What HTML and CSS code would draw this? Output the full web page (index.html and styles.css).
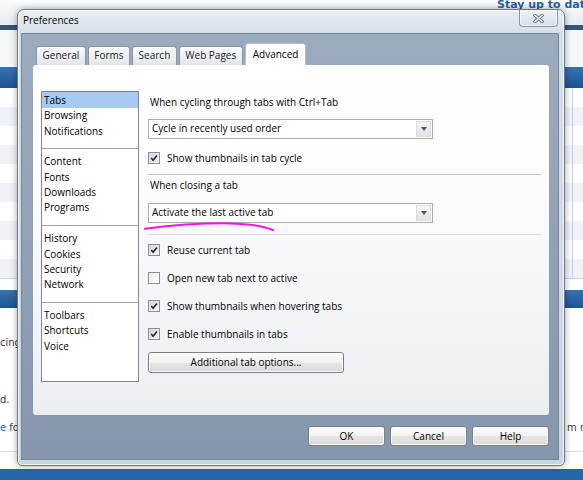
FILE: index.html
```html
<!DOCTYPE html>
<html lang="en">
<head>
<meta charset="utf-8">
<title>Preferences</title>
<link rel="stylesheet" href="styles.css">
</head>
<body>
<div class="page">
  <div class="site-top"><span class="tagline">Stay up to date</span></div>
  <div class="site-nav"></div>
  <div class="site-gap"></div>
  <div class="band"></div>
  <div class="grid">
    <div class="row"><span class="main"></span><span class="side"></span></div>
    <div class="row"><span class="main"></span><span class="side"></span></div>
    <div class="row"><span class="main"></span><span class="side"></span></div>
    <div class="row"><span class="main"></span><span class="side"></span></div>
    <div class="row"><span class="main"></span><span class="side"></span></div>
    <div class="row"><span class="main"></span><span class="side"></span></div>
    <div class="row"><span class="main"></span><span class="side"></span></div>
    <div class="row"><span class="main"></span><span class="side"></span></div>
    <div class="row"><span class="main"></span><span class="side"></span></div>
    <div class="row"><span class="main"></span><span class="side"></span></div>
  </div>
  <div class="grid-gap"></div>
  <div class="band band-2"></div>
  <div class="copy">
    <p class="line l1">cing</p>
    <p class="line l2">d.</p>
    <p class="line l3"><span class="left"><span class="link">e</span> for</span><span class="right">m m</span></p>
  </div>
  <div class="site-rule"></div>
  <div class="site-space"></div>
  <div class="site-foot"></div>
</div>

<div class="dialog">
  <div class="titlebar">
    <span class="title">Preferences</span>
    <button class="close" type="button" aria-label="Close">
      <svg width="11" height="9" viewBox="0 0 11 9"><path class="x-out" d="M2 1.5 L9 7.5 M9 1.5 L2 7.5"/><path class="x-in" d="M2 1.5 L9 7.5 M9 1.5 L2 7.5"/></svg>
    </button>
  </div>
  <div class="client">
    <div class="tabs">
      <span class="tab">General</span>
      <span class="tab">Forms</span>
      <span class="tab">Search</span>
      <span class="tab">Web Pages</span>
      <span class="tab active">Advanced</span>
    </div>
    <div class="panel">
      <div class="cats">
        <ul class="cat-group">
          <li class="cat sel">Tabs</li>
          <li class="cat">Browsing</li>
          <li class="cat">Notifications</li>
        </ul>
        <ul class="cat-group">
          <li class="cat">Content</li>
          <li class="cat">Fonts</li>
          <li class="cat">Downloads</li>
          <li class="cat">Programs</li>
        </ul>
        <ul class="cat-group">
          <li class="cat">History</li>
          <li class="cat">Cookies</li>
          <li class="cat">Security</li>
          <li class="cat">Network</li>
        </ul>
        <ul class="cat-group">
          <li class="cat">Toolbars</li>
          <li class="cat">Shortcuts</li>
          <li class="cat">Voice</li>
        </ul>
      </div>
      <div class="settings">
        <div class="heading">When cycling through tabs with Ctrl+Tab</div>
        <div class="combo"><span class="combo-value">Cycle in recently used order</span><span class="combo-btn"></span></div>
        <div class="check first">
          <span class="box on"><svg width="10" height="10" viewBox="0 0 10 10"><path d="M2.2 5 L4.1 7.3 L7.9 2.4"/></svg></span>
          <span>Show thumbnails in tab cycle</span>
        </div>
        <div class="rule"></div>
        <div class="heading heading-2">When closing a tab</div>
        <div class="combo"><span class="combo-value">Activate the last active tab</span><span class="combo-btn"></span></div>
        <div class="rule soft"></div>
        <div class="check-list">
          <div class="check">
            <span class="box on"><svg width="10" height="10" viewBox="0 0 10 10"><path d="M2.2 5 L4.1 7.3 L7.9 2.4"/></svg></span>
            <span>Reuse current tab</span>
          </div>
          <div class="check">
            <span class="box off"></span>
            <span>Open new tab next to active</span>
          </div>
          <div class="check">
            <span class="box on"><svg width="10" height="10" viewBox="0 0 10 10"><path d="M2.2 5 L4.1 7.3 L7.9 2.4"/></svg></span>
            <span>Show thumbnails when hovering tabs</span>
          </div>
          <div class="check">
            <span class="box on"><svg width="10" height="10" viewBox="0 0 10 10"><path d="M2.2 5 L4.1 7.3 L7.9 2.4"/></svg></span>
            <span>Enable thumbnails in tabs</span>
          </div>
        </div>
        <button class="btn wide" type="button">Additional tab options...</button>
      </div>
    </div>
    <div class="footer">
      <button class="btn" type="button">OK</button>
      <button class="btn" type="button">Cancel</button>
      <button class="btn" type="button">Help</button>
    </div>
  </div>
</div>

<svg class="annot" width="583" height="480" viewBox="0 0 583 480" aria-hidden="true"><path d="M145 228.8 Q190 223 230 223.4 Q259 224 273 230"/></svg>
</body>
</html>
```

FILE: styles.css
```css
* { box-sizing: border-box; }
html, body { margin: 0; padding: 0; }
body {
  width: 583px;
  height: 480px;
  overflow: hidden;
  position: relative;
  background: #fff;
  font-family: "Open Sans", "Noto Sans", sans-serif;
  font-size: 10px;
  color: #000;
}

/* ---------- web page behind the dialog ---------- */
.page { display: flex; flex-direction: column; height: 480px; }
.site-top {
  height: 25px;
  flex: none;
  padding-left: 497px;
  background: linear-gradient(#fafcfd, #e6ecf2);
}
.tagline {
  display: block;
  margin-top: -1px;
  font: bold 11px/12px "DejaVu Sans", sans-serif;
  color: #2b5f9d;
  white-space: nowrap;
}
.site-nav { height: 5px; flex: none; background: #36557a; }
.site-gap { height: 37px; flex: none; background: #f5f8fb; }
.band { height: 21px; flex: none; background: linear-gradient(#3674b4, #1b5391); }
.band-2 { height: 18px; }
.grid { flex: none; border-bottom: 1px solid #c3d4e8; }
.row { display: grid; grid-template-columns: 572px 1fr; height: 19px; }
.row:nth-child(even) { background: #eff3f8; }
.row .side { border-left: 1px solid #c3d4e8; }
.grid-gap { height: 11px; flex: none; }
.copy {
  height: 143px;
  flex: none;
  padding-top: 28px;
  font: 10px/14px "DejaVu Sans", sans-serif;
  color: #3a3a3a;
  white-space: nowrap;
}
.line { margin: 0; }
.l2 { margin-top: 43px; }
.l3 { margin-top: 14px; display: flex; }
.l3 .left { flex: 0 0 567px; }
.link { color: #2d64a8; }
.site-rule { height: 1px; flex: none; background: #dbe1e8; }
.site-space { height: 17px; flex: none; }
.site-foot { height: 11px; flex: none; background: #2766a6; }

/* ---------- dialog window ---------- */
.dialog {
  position: absolute;
  left: 17px;
  top: 9px;
  width: 548px;
  height: 457px;
  border: 1px solid #6c7785;
  border-radius: 7px 7px 5px 5px;
  padding: 0 5px 5px 3px;
  background: linear-gradient(#eaeff4, #d6dee7 24px, #d2dbe5 60%, #cbd4df);
  box-shadow: 0 0 7px rgba(0, 0, 0, .35), inset 0 0 0 1px rgba(255, 255, 255, .75);
  display: flex;
  flex-direction: column;
}
.titlebar { height: 23px; flex: none; display: flex; align-items: flex-start; }
.title { padding-left: 2px; line-height: 21px; color: #000; }
.close {
  margin-left: auto;
  margin-right: 1px;
  width: 39px;
  height: 17px;
  padding: 0;
  border: 1px solid #8a96a5;
  border-top: none;
  border-radius: 0 0 4px 4px;
  background: linear-gradient(#eef2f6, #d8dfe7);
  box-shadow: inset 0 0 0 1px rgba(255, 255, 255, .6);
  display: flex;
  align-items: center;
  justify-content: center;
}
.x-out { stroke: #6b7684; stroke-width: 3.4; fill: none; stroke-linecap: square; }
.x-in { stroke: #f4f6f8; stroke-width: 1.5; fill: none; stroke-linecap: square; }

.client {
  flex: 1;
  border: 1px solid #76869b;
  background: linear-gradient(#9dabbf, #8596ad);
  padding: 9px 9px 13px 11px;
  display: flex;
  flex-direction: column;
}

.tabs {
  display: flex;
  align-items: flex-end;
  gap: 2px;
  height: 22px;
  flex: none;
  padding-left: 3px;
}
.tab {
  height: 19px;
  padding: 0 5.5px;
  border: 1px solid #8894a5;
  border-bottom: none;
  border-radius: 3px 3px 0 0;
  background: linear-gradient(#fbfbfc, #e2e5ea);
  color: #222;
  line-height: 16px;
  white-space: nowrap;
}
.tab.active {
  height: 22px;
  padding: 0 7px;
  background: #fff;
  border-color: #b3bdca;
  color: #000;
  line-height: 21px;
}

.panel {
  height: 350px;
  flex: none;
  background: linear-gradient(#fff, #fcfcfd 35%, #eceef2);
  border-radius: 3px;
  padding: 26px 8px 0;
  display: flex;
  gap: 9px;
}

/* category list */
.cats {
  width: 98px;
  height: 291px;
  flex: none;
  border: 1px solid #828790;
  background: #fff;
  padding-top: 1px;
}
.cat-group { margin: 0; padding: 0; list-style: none; }
.cat-group + .cat-group {
  border-top: 1px solid #a5a5a5;
  margin-top: 9px;
  padding-top: 5.5px;
}
.cat { height: 15.33px; line-height: 15.33px; padding-left: 2px; white-space: nowrap; }
.cat.sel { background: #a6caf1; margin-top: -1px; padding-top: 1px; height: 16.33px; }

/* settings column */
.settings { flex: 1; padding-top: 4px; display: flex; flex-direction: column; }
.heading { line-height: 15px; padding-left: 2px; }
.heading-2 { margin-top: 3.5px; }
.combo {
  margin-top: 9px;
  width: 285px;
  height: 20px;
  flex: none;
  border: 1px solid #abadb3;
  background: #fff;
  display: flex;
}
.heading-2 + .combo { margin-top: 10px; }
.combo-value { flex: 1; padding-left: 3px; line-height: 17px; white-space: nowrap; }
.combo-btn {
  width: 15px;
  margin: 1px;
  border: 1px solid #dcdcdc;
  background: linear-gradient(#f6f6f6, #e1e1e1);
  display: flex;
  align-items: center;
  justify-content: center;
}
.combo-btn::after {
  content: "";
  border-left: 3.5px solid transparent;
  border-right: 3.5px solid transparent;
  border-top: 4px solid #4b5568;
}

.check { display: flex; align-items: center; gap: 7px; height: 15px; white-space: nowrap; }
.check.first { margin-top: 11px; }
.box {
  width: 12px;
  height: 12px;
  flex: none;
  border: 1px solid #8f8f8f;
  display: flex;
  align-items: center;
  justify-content: center;
}
.box.on { background: linear-gradient(135deg, #d3d7dd, #f4f5f7); }
.box.off { background: linear-gradient(135deg, #eceef0, #fff); }
.box svg path { fill: none; stroke: #1f2633; stroke-width: 1.6; }

.rule { margin-top: 8.5px; height: 1px; flex: none; background: #c6c6c6; }
.rule.soft { margin-top: 11px; background: #dedfe2; }

.check-list { margin-top: 7.5px; display: flex; flex-direction: column; gap: 13px; }

.btn {
  width: 77px;
  height: 20px;
  padding: 0;
  border: 1px solid #7f7f7f;
  border-radius: 3px;
  background: linear-gradient(#fdfdfd, #f1f1f1 50%, #e6e6e6 51%, #dadada);
  box-shadow: inset 0 0 0 1px rgba(255, 255, 255, .85);
  font: inherit;
  color: #000;
  line-height: 17px;
}
.btn.wide { width: 196px; height: 21px; margin-top: 10.5px; }

.footer { margin-top: 11px; display: flex; justify-content: flex-end; gap: 5px; }

/* hand-drawn annotation over the screenshot */
.annot { position: absolute; left: 0; top: 0; pointer-events: none; }
.annot path { fill: none; stroke: #f014f0; stroke-width: 2; stroke-linecap: round; }
```
